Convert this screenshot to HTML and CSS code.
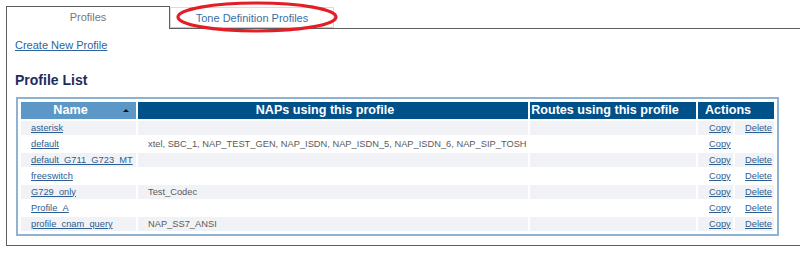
FILE: index.html
```html
<!DOCTYPE html>
<html>
<head>
<meta charset="utf-8">
<link rel="stylesheet" href="styles.css">
</head>
<body>
<div class="page">
  <div class="tabs">
    <div class="tab tab-active">Profiles</div>
    <div class="tab tab-other">Tone Definition Profiles</div>
    <svg class="ring" width="170" height="36" viewBox="0 0 170 36"><ellipse cx="85" cy="17" rx="79" ry="14" fill="none" stroke="#e41e26" stroke-width="3.2"/></svg>
  </div>
  <div class="panel">
    <a class="create" href="#">Create New Profile</a>
    <h2 class="title">Profile List</h2>
    <table class="grid">
      <thead>
        <tr>
          <th class="c-name sorted">Name<span class="arrow"></span></th>
          <th class="c-naps">NAPs using this profile</th>
          <th class="c-routes">Routes using this profile</th>
          <th class="c-act" colspan="2">Actions</th>
        </tr>
      </thead>
      <tbody>
        <tr class="alt"><td><a href="#">asterisk</a></td><td></td><td></td><td class="c-copy"><a href="#">Copy</a></td><td class="c-del"><a href="#">Delete</a></td></tr>
        <tr><td><a href="#">default</a></td><td>xtel, SBC_1, NAP_TEST_GEN, NAP_ISDN, NAP_ISDN_5, NAP_ISDN_6, NAP_SIP_TOSH</td><td></td><td class="c-copy"><a href="#">Copy</a></td><td class="c-del"></td></tr>
        <tr class="alt"><td><a href="#">default_G711_G723_MT</a></td><td></td><td></td><td class="c-copy"><a href="#">Copy</a></td><td class="c-del"><a href="#">Delete</a></td></tr>
        <tr><td><a href="#">freeswitch</a></td><td></td><td></td><td class="c-copy"><a href="#">Copy</a></td><td class="c-del"><a href="#">Delete</a></td></tr>
        <tr class="alt"><td><a href="#">G729_only</a></td><td>Test_Codec</td><td></td><td class="c-copy"><a href="#">Copy</a></td><td class="c-del"><a href="#">Delete</a></td></tr>
        <tr><td><a href="#">Profile_A</a></td><td></td><td></td><td class="c-copy"><a href="#">Copy</a></td><td class="c-del"><a href="#">Delete</a></td></tr>
        <tr class="alt"><td><a href="#">profile_cnam_query</a></td><td>NAP_SS7_ANSI</td><td></td><td class="c-copy"><a href="#">Copy</a></td><td class="c-del"><a href="#">Delete</a></td></tr>
      </tbody>
    </table>
  </div>
</div>
</body>
</html>
```
FILE: styles.css
```css
html, body {
  margin: 0;
  padding: 0;
  background: #ffffff;
  font-family: "Liberation Sans", Arial, sans-serif;
}
.page {
  padding: 6px 0 0 6px;
  width: 820px;
}
.tabs {
  display: flex;
  align-items: flex-end;
  position: relative;
  height: 22px;
}
.tab {
  box-sizing: border-box;
  font-size: 11px;
  text-align: center;
}
.tab-active {
  width: 164px;
  height: 23px;
  border: 1px solid #5e5e5e;
  border-bottom: none;
  background: #ffffff;
  color: #777777;
  line-height: 21px;
  position: relative;
  z-index: 1;
  margin-bottom: -1px;
}
.tab-other {
  width: 164px;
  height: 21px;
  border: 1px solid #dcdcdc;
  border-bottom: 1px solid #c8c8c8;
  color: #3b6fa6;
  line-height: 20px;
}
.ring {
  position: absolute;
  left: 166px;
  top: -6px;
  z-index: 2;
}
.panel {
  border-top: 1px solid #5e5e5e;
  border-left: 1px solid #5e5e5e;
  border-bottom: 1px solid #5e5e5e;
  height: 218px;
  box-sizing: border-box;
  padding: 10px 0 0 8px;
}
.create {
  display: block;
  font-size: 11px;
  line-height: 13px;
  color: #2d649b;
  text-decoration: underline;
}
.title {
  margin: 20px 0 0 0;
  font-size: 14px;
  line-height: 16px;
  color: #1c2c5c;
  font-weight: bold;
}
.grid {
  margin: 9px 0 0 1px;
  width: 763px;
  border: 2px solid #8fb2d2;
  padding: 1px;
  border-spacing: 2px;
  font-size: 9.3px;
}
.grid th {
  height: 17px;
  padding: 0 16px 0 0;
  background: #00508a;
  color: #ffffff;
  font-size: 12.6px;
  font-weight: bold;
  text-align: center;
  line-height: 17px;
  white-space: nowrap;
}
.grid th.sorted {
  background: #5b98c7;
  position: relative;
}
.arrow {
  position: absolute;
  right: 7px;
  top: 7px;
  width: 0;
  height: 0;
  border-left: 3px solid transparent;
  border-right: 3px solid transparent;
  border-bottom: 3px solid #111111;
}
.c-name { width: 99px; }
.c-naps { width: 374px; }
.c-routes { width: 150px; }
.grid td {
  height: 14px;
  padding: 0 0 0 10px;
  color: #5a5a5a;
  line-height: 13px;
  white-space: nowrap;
  background: #ffffff;
}
.grid tr.alt td {
  background: #f1f2f6;
}
.grid td.c-copy {
  width: 24px;
  padding-left: 11px;
}
.grid td.c-del {
  width: 29px;
}
.grid a {
  color: #2d5d91;
  text-decoration: underline;
}
```
